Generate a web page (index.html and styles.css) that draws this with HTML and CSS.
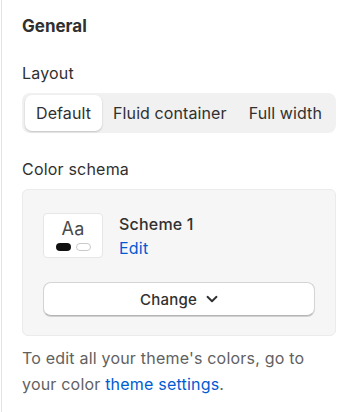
FILE: index.html
```html
<!DOCTYPE html>
<html lang="en">
<head>
  <meta charset="UTF-8">
  <meta name="viewport" content="width=device-width, initial-scale=1.0">
  <title>General settings</title>
  <link rel="stylesheet" href="styles.css">
</head>
<body>
  <div class="panel">
    <h2 class="title">General</h2>

    <div class="field">
      <div class="label">Layout</div>
      <div class="segments">
        <button class="segment active">Default</button>
        <button class="segment">Fluid container</button>
        <button class="segment">Full width</button>
      </div>
    </div>

    <div class="field">
      <div class="label">Color schema</div>
      <div class="scheme-card">
        <div class="scheme-row">
          <div class="swatch">
            <span class="swatch-text">Aa</span>
            <span class="swatch-pills">
              <span class="pill dark"></span>
              <span class="pill light"></span>
            </span>
          </div>
          <div class="scheme-info">
            <div class="scheme-name">Scheme 1</div>
            <a class="link" href="#">Edit</a>
          </div>
        </div>
        <button class="change-btn">
          Change
          <svg width="12" height="12" viewBox="0 0 12 12" fill="none">
            <path d="M1.5 3.8 6 8.2l4.5-4.4" stroke="#303030" stroke-width="1.9" stroke-linecap="round" stroke-linejoin="round"/>
          </svg>
        </button>
      </div>
    </div>

    <p class="hint">To edit all your theme's colors, go to your color <a class="link" href="#">theme settings</a>.</p>
  </div>
</body>
</html>
```

FILE: styles.css
```css
body {
  margin: 0;
  font-family: Inter, "Noto Sans", sans-serif;
  color: #303030;
  background: #fff;
  letter-spacing: 0.2px;
}

.panel {
  margin-left: 1px;
  border-left: 1px solid #e3e3e3;
  padding: 14px 19px 0 20px;
  min-height: 412px;
  box-sizing: border-box;
}

.title {
  margin: 0;
  font-size: 17px;
  font-weight: 650;
  line-height: 24px;
  letter-spacing: 0;
}

.field {
  margin-top: 24px;
}

.label {
  font-size: 16px;
  line-height: 22px;
  margin-bottom: 9px;
}

.field + .field {
  margin-top: 25px;
}

.segments {
  display: flex;
  background: #f1f1f1;
  border-radius: 8px;
  padding: 2px 3px;
}

.segment {
  flex-shrink: 0;
  white-space: nowrap;
  border: none;
  background: none;
  font-family: inherit;
  font-size: 16px;
  letter-spacing: 0.1px;
  color: #303030;
  padding: 0 11px;
  height: 36px;
  border-radius: 7px;
  cursor: pointer;
}

.segment.active {
  background: #fff;
  box-shadow: 0 1px 2px rgba(0, 0, 0, 0.2);
}

.scheme-card {
  background: #f6f6f6;
  border: 1px solid #ebebeb;
  border-radius: 6px;
  padding: 23px 20px 19px 20px;
}

.scheme-row {
  display: flex;
  gap: 16px;
}

.swatch {
  width: 58px;
  height: 43px;
  background: #fff;
  border: 1px solid #e6e6e6;
  border-radius: 4px;
  display: flex;
  flex-direction: column;
  align-items: center;
  justify-content: center;
}

.swatch-text {
  font-size: 18px;
  line-height: 18px;
  color: #4a4a4a;
}

.swatch-pills {
  display: flex;
  gap: 5px;
  margin-top: 5px;
}

.pill {
  width: 15px;
  height: 8px;
  border-radius: 4px;
  box-sizing: border-box;
}

.pill.dark {
  background: #111;
}

.pill.light {
  background: #fff;
  border: 1px solid #c9c9c9;
}

.scheme-name {
  font-size: 16px;
  font-weight: 500;
  line-height: 22px;
}

.link {
  color: #005bd3;
  text-decoration: none;
}

.scheme-info .link {
  display: block;
  font-size: 16px;
  line-height: 26px;
}

.change-btn {
  display: flex;
  align-items: center;
  justify-content: center;
  gap: 9px;
  width: 100%;
  height: 34px;
  margin-top: 21px;
  background: #fff;
  border: 1px solid #d4d4d4;
  border-bottom-color: #b5b5b5;
  border-radius: 8px;
  box-shadow: 0 1px 0 rgba(0, 0, 0, 0.15);
  font-family: inherit;
  font-size: 15px;
  font-weight: 550;
  letter-spacing: inherit;
  color: #303030;
  cursor: pointer;
}

.hint {
  margin: 9px 0 0 0;
  font-size: 16px;
  line-height: 26px;
  color: #616161;
}
```
